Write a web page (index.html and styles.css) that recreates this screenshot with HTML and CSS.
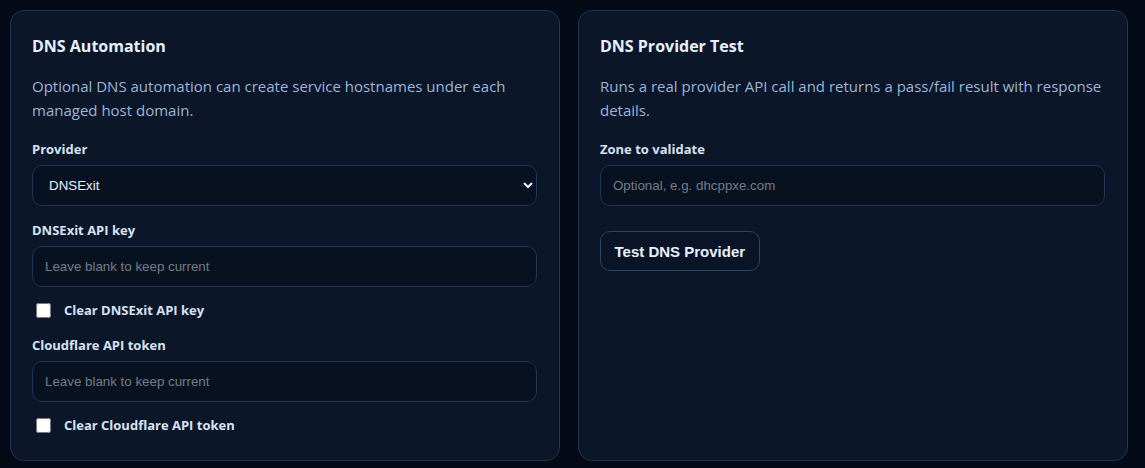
FILE: index.html
```html
<!DOCTYPE html>
<html lang="en">
<head>
<meta charset="utf-8">
<title>DNS</title>
<link rel="stylesheet" href="styles.css">
</head>
<body>
<main class="grid">
  <section class="card">
    <h2 class="card-title">DNS Automation</h2>
    <p class="card-desc">Optional DNS automation can create service hostnames under each managed host domain.</p>
    <div class="form">
      <div class="field">
        <label class="label" for="prov">Provider</label>
        <select id="prov" class="control select">
          <option>DNSExit</option>
          <option>Cloudflare</option>
        </select>
      </div>
      <div class="field">
        <label class="label" for="dkey">DNSExit API key</label>
        <input id="dkey" class="control" type="password" placeholder="Leave blank to keep current">
      </div>
      <label class="check"><input type="checkbox" class="box"><span>Clear DNSExit API key</span></label>
      <div class="field">
        <label class="label" for="cf">Cloudflare API token</label>
        <input id="cf" class="control" type="password" placeholder="Leave blank to keep current">
      </div>
      <label class="check"><input type="checkbox" class="box"><span>Clear Cloudflare API token</span></label>
    </div>
  </section>
  <section class="card">
    <h2 class="card-title">DNS Provider Test</h2>
    <p class="card-desc">Runs a real provider API call and returns a pass/fail result with response details.</p>
    <div class="form">
      <div class="field">
        <label class="label" for="zone">Zone to validate</label>
        <input id="zone" class="control" type="text" placeholder="Optional, e.g. dhcppxe.com">
      </div>
      <div class="actions">
        <button class="btn" type="button">Test DNS Provider</button>
      </div>
    </div>
  </section>
</main>
</body>
</html>
```
FILE: styles.css
```css
html, body {
  margin: 0;
  padding: 0;
  background: #050b16;
  height: 100%;
}
body {
  font-family: "Open Sans", "Noto Sans", sans-serif;
}
.grid {
  display: grid;
  grid-template-columns: 1fr 1fr;
  gap: 18px;
  padding: 10px 17px 9px 10px;
  box-sizing: border-box;
  height: 468px;
}
.card {
  background: #0b1629;
  border: 1px solid #1f3456;
  border-radius: 14px;
  padding: 25px 22px 24px 21px;
  box-sizing: border-box;
}
.card-title {
  margin: 0;
  font-size: 16px;
  line-height: 21px;
  font-weight: 700;
  color: #e8f1ff;
}
.card-desc {
  margin: 17px 0 0 0;
  font-size: 15px;
  line-height: 24px;
  color: #9fb5d6;
}
.form {
  margin-top: 18px;
  display: flex;
  flex-direction: column;
  gap: 15px;
}
.field {
  display: flex;
  flex-direction: column;
  gap: 7px;
}
.label {
  font-size: 13px;
  line-height: 18px;
  font-weight: 700;
  color: #d7e3f5;
}
.control {
  height: 41px;
  box-sizing: border-box;
  border: 1px solid #1f3456;
  border-radius: 10px;
  background: #08111f;
  color: #e8f1ff;
  font-family: "Liberation Sans", Arial, sans-serif;
  font-size: 13.333px;
  padding: 0 12px;
  outline: none;
}
.control::placeholder {
  color: #737c8a;
}
.select {
  padding: 0 8px 0 12px;
}
.check {
  display: flex;
  align-items: center;
  gap: 13px;
  padding-left: 4px;
  font-size: 13px;
  line-height: 18px;
  font-weight: 700;
  color: #d7e3f5;
  margin: -1px 0 2px 0;
}
.box {
  width: 15px;
  height: 15px;
  margin: 0;
}
.actions {
  margin-top: 10px;
  display: flex;
}
.btn {
  height: 40px;
  padding: 0 13.5px;
  border: 1px solid #284568;
  border-radius: 10px;
  background: #0a1426;
  color: #e8f1ff;
  font-family: "Liberation Sans", Arial, sans-serif;
  font-size: 15px;
  font-weight: 700;
}
```
